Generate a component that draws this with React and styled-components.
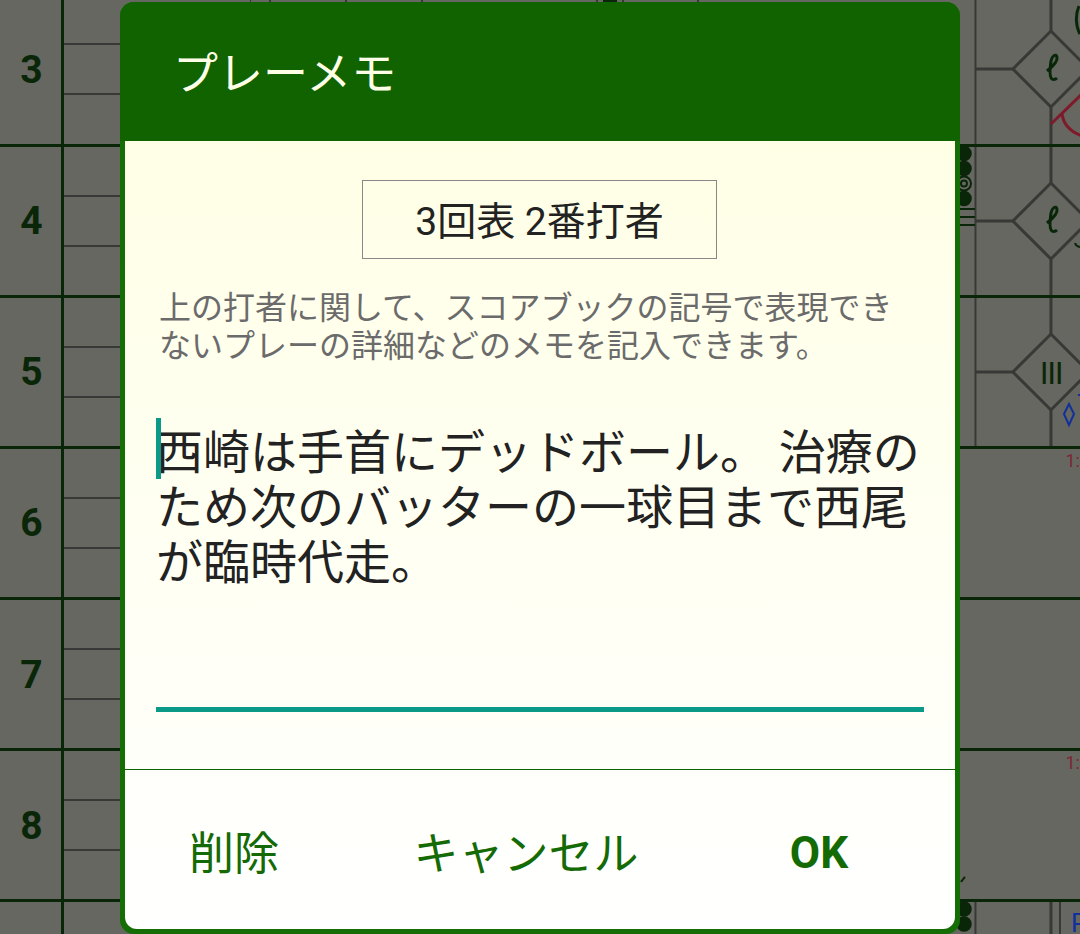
import styled, { createGlobalStyle } from "styled-components";

const GlobalStyle = createGlobalStyle`
  html, body {
    margin: 0;
    padding: 0;
    height: 934px;
    overflow: hidden;
    background: #666760;
  }
`;

const CJK = `Roboto, "Noto Sans CJK JP", sans-serif`;
const ink = "#0a2608";
const rule = "#383936";

const Page = styled.div`
  position: relative;
  width: 1080px;
  height: 934px;
  overflow: hidden;
  background: #666760;
  font-family: ${CJK};
`;

const Sheet = styled.div`
  margin-top: -4.7px;
`;
const InningRow = styled.div`
  display: flex;
  box-sizing: border-box;
  height: 151.2px;
  border-bottom: 3px solid ${ink};
`;
const InningNumber = styled.div`
  display: flex;
  align-items: center;
  justify-content: center;
  box-sizing: border-box;
  width: 64px;
  padding: 1px 0 0 2px;
  border-right: 3px solid ${ink};
  font-size: 39px;
  font-weight: 700;
  color: ${ink};
`;
const BatterLines = styled.div`
  display: flex;
  flex-direction: column;
  width: 186px;
`;
const BatterLine = styled.div`
  flex: 1;
  & + & {
    border-top: 2px solid ${rule};
  }
`;
const Marks = styled.svg`
  display: block;
  width: 830px;
  height: 148.2px;
`;

const Dialog = styled.section`
  position: absolute;
  left: 120px;
  top: 2px;
  display: flex;
  flex-direction: column;
  box-sizing: border-box;
  width: 840px;
  height: 932px;
  padding-bottom: 5px;
  border-radius: 14px;
  background: #156d05;
`;
const DialogHeader = styled.header`
  display: flex;
  align-items: center;
  box-sizing: border-box;
  height: 139px;
  padding: 0 0 3px 53px;
  border-radius: 14px 14px 0 0;
  background: #116300;
  color: #ffffe8;
  font-size: 45px;
`;
const DialogBody = styled.div`
  flex: 1;
  display: flex;
  flex-direction: column;
  margin: 0 5px;
  border-radius: 0 0 12px 12px;
  background: linear-gradient(#ffffe6, #ffffff);
`;
const DialogContent = styled.div`
  flex: 1;
  display: flex;
  flex-direction: column;
  align-items: flex-start;
`;
const BatterLabel = styled.div`
  display: flex;
  align-items: center;
  justify-content: center;
  box-sizing: border-box;
  width: 355px;
  height: 79px;
  margin: 39px 0 0 237px;
  padding-bottom: 3px;
  border: 1px solid #888888;
  color: #222222;
  font-size: 39px;
`;
const HelpText = styled.p`
  width: 740px;
  margin: 30px 0 0 34px;
  color: #6b6b6b;
  font-size: 32px;
  line-height: 38px;
`;
const Editor = styled.div`
  position: relative;
  box-sizing: border-box;
  width: 768px;
  height: 294px;
  margin: 53px 0 0 31px;
  padding: 7px 0 0 0;
  border-bottom: 5px solid #0a9a87;
  color: #222222;
  font-size: 47px;
  line-height: 55px;
`;
const Caret = styled.span`
  position: absolute;
  left: 0;
  top: 0;
  width: 5px;
  height: 61px;
  background: #0a9a87;
`;
const ButtonBar = styled.div`
  display: grid;
  grid-template-columns: 218px 366px 220px;
  box-sizing: border-box;
  height: 160px;
  padding-top: 7px;
  border-top: 1px solid #116300;
`;
const DialogButton = styled.button`
  padding: 0 0 ${(props) => (props.$strong ? 0 : 6)}px;
  border: 0;
  background: none;
  color: #146a05;
  font-family: ${CJK};
  font-size: ${(props) => (props.$strong ? 44 : 45)}px;
  font-weight: ${(props) => (props.$strong ? 700 : 400)};
`;

const Diamond = ({ cy = 74 }) => (
  <g fill="none" stroke={rule} strokeWidth="3">
    <path d={`M1013 ${cy}L1051 ${cy - 38}L1089 ${cy}L1051 ${cy + 38}Z`} />
    <path d={`M975 ${cy}H1013`} />
    <path d={`M1051 0V${cy - 38}M1051 ${cy + 38}V149`} />
    <path d="M975.5 0V149" strokeWidth="2" />
  </g>
);

const LoopL = () => (
  <path
    d="M1047 76C1052 72 1058 66 1057 62C1056 58 1052 61 1051 66C1050 73 1049 82 1052 84C1054 85 1056 84 1057 83"
    fill="none"
    stroke={ink}
    strokeWidth="3"
  />
);

const Ball = ({ cy }) => <circle cx="964" cy={cy} r="7.8" fill={ink} />;

const rows = [
  {
    no: 3,
    marks: (
      <>
        <g stroke={rule} strokeWidth="2">
          <path d="M250 0V7M270 0V7M346 0V7M422 0V7M597 0V7M623 0V7M698 0V7" />
        </g>
        <rect x="603" y="0" width="14" height="7" fill={ink} />
        <Diamond />
        <LoopL />
        <path d="M1079 11C1075 20 1076 32 1080 39" fill="none" stroke={ink} strokeWidth="3" />
        <path
          d="M1051 129L1082 99M1062 118C1063 130 1071 137 1082 141"
          fill="none"
          stroke="#7e1a2a"
          strokeWidth="3"
        />
      </>
    ),
  },
  {
    no: 4,
    marks: (
      <>
        <Diamond />
        <LoopL />
        <Ball cy={6.5} />
        <Ball cy={21.5} />
        <circle cx="964" cy="36.5" r="7" fill="none" stroke={ink} strokeWidth="2" />
        <circle cx="964" cy="36.5" r="3" fill="none" stroke={ink} strokeWidth="2" />
        <Ball cy={51.5} />
        <path d="M960 62H975M960 70H975M960 78H975" stroke={ink} strokeWidth="2" />
        <path d="M1075 96C1076 99 1078 100 1081 100" fill="none" stroke={ink} strokeWidth="2" />
      </>
    ),
  },
  {
    no: 5,
    marks: (
      <>
        <Diamond />
        <text x="1051" y="86" fill={ink} fontFamily="Liberation Sans" fontSize="32" letterSpacing="-1.5" textAnchor="middle">
          III
        </text>
        <path d="M1069 106L1074 116L1069 127L1064 116Z" fill="none" stroke="#12309a" strokeWidth="2" />
        <path d="M1078 97H1081" stroke="#12309a" strokeWidth="2" />
      </>
    ),
  },
  {
    no: 6,
    marks: (
      <text x="1065.5" y="18.5" fill="#7e2636" fontFamily="Roboto" fontSize="18">
        1:
      </text>
    ),
  },
  { no: 7, marks: null },
  {
    no: 8,
    marks: (
      <>
        <text x="1065.5" y="18.5" fill="#7e2636" fontFamily="Roboto" fontSize="18">
          1:
        </text>
        <path d="M961 131L965 126" stroke={ink} strokeWidth="2" />
      </>
    ),
  },
  {
    no: "",
    marks: (
      <>
        <Ball cy={7} />
        <Ball cy={22} />
        <path d="M975.5 0V32M1060 0V32" stroke={rule} strokeWidth="2" />
        <path d="M1051 0V32" stroke={rule} strokeWidth="3" />
        <text x="1071" y="30" fill="#12309a" fontFamily="Roboto" fontSize="26">
          R
        </text>
      </>
    ),
  },
];

export default function App() {
  return (
    <Page>
      <GlobalStyle />
      <Sheet>
        {rows.map((row, i) => (
          <InningRow key={i}>
            <InningNumber>{row.no}</InningNumber>
            <BatterLines>
              <BatterLine />
              <BatterLine />
              <BatterLine />
            </BatterLines>
            <Marks viewBox="250 0 830 148.2">{row.marks}</Marks>
          </InningRow>
        ))}
      </Sheet>
      <Dialog>
        <DialogHeader>プレーメモ</DialogHeader>
        <DialogBody>
          <DialogContent>
            <BatterLabel>3回表 2番打者</BatterLabel>
            <HelpText>
              上の打者に関して、スコアブックの記号で表現できないプレーの詳細などのメモを記入できます。
            </HelpText>
            <Editor>
              <Caret />
              西崎は手首にデッドボール。 治療のため次のバッターの一球目まで西尾が臨時代走。
            </Editor>
          </DialogContent>
          <ButtonBar>
            <DialogButton>削除</DialogButton>
            <DialogButton>キャンセル</DialogButton>
            <DialogButton $strong>OK</DialogButton>
          </ButtonBar>
        </DialogBody>
      </Dialog>
    </Page>
  );
}
